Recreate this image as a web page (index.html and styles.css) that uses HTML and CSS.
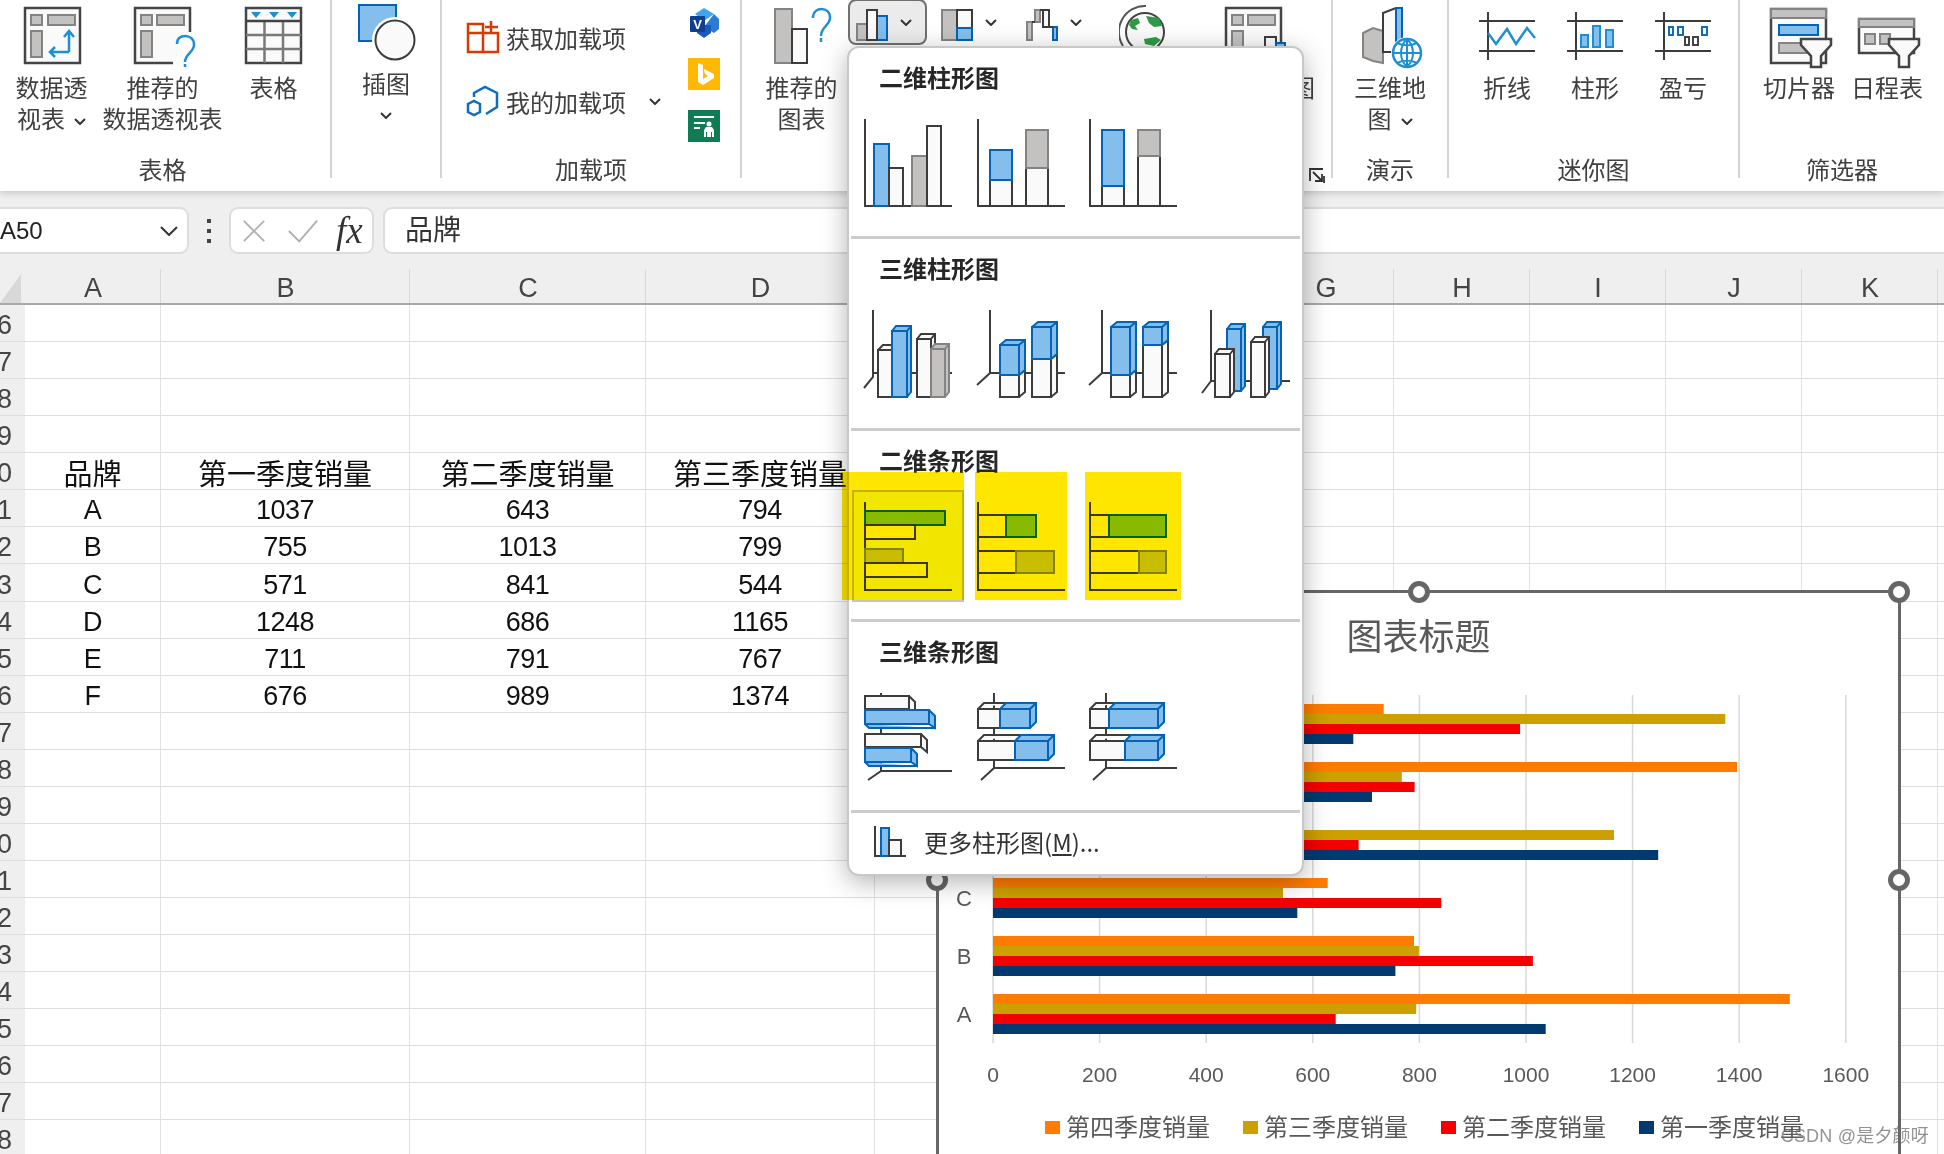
FILE: index.html
```html
<!DOCTYPE html>
<html lang="zh-CN">
<head>
<meta charset="utf-8">
<title>Excel 插入图表</title>
<link rel="stylesheet" href="styles.css">
</head>
<body>
<header class="ribbon">
  <section class="group g1">
    <div class="body">
      <div class="btn">
        <svg class="big" viewBox="0 0 60 73"><rect class="frame" x="3" y="8" width="55" height="55"/><path class="lg" d="M9 15h11v10H9zM26 15h27v10H26zM9 31h11v26H9z"/><path class="arrow" d="M47 52V32M42 37l5-6 5 6M47 52H28M33 47l-5 5 5 5"/></svg>
        <div class="lbl">数据透<br>视表<svg class="chev in" viewBox="0 0 12 7"><path d="M1 1l5 5 5-5"/></svg></div>
      </div>
      <div class="btn">
        <svg class="big" viewBox="0 0 60 73"><path class="frame" d="M40 63H2V8H57V32"/><path class="lg" d="M8 15h11v10H8zM24 15h27v10H24zM8 31h11v26H8z"/><path class="arrow" d="M44 44C44 38 48 36 52 36C57 36 61 39 61 45C61 52 52 54 52 62M52 64v3"/></svg>
        <div class="lbl">推荐的<br>数据透视表</div>
      </div>
      <div class="btn">
        <svg class="big" viewBox="0 0 60 73"><rect class="frame" x="2" y="8" width="55" height="55"/><path class="grid" d="M2 35H57M2 49H57M20.5 21V63M39 21V63"/><path class="dark" d="M2 21H57"/><path class="tri" d="M7 12h10l-5 6zM25 12h10l-5 6zM43 12h10l-5 6z"/></svg>
        <div class="lbl">表格</div>
      </div>
    </div>
    <div class="glabel">表格</div>
  </section>

  <section class="group g2">
    <div class="body">
      <div class="btn">
        <svg class="big" viewBox="0 0 60 73"><rect class="lb" x="3" y="5" width="37" height="36"/><circle class="halo" cx="39" cy="40" r="23"/><circle class="lw" cx="39" cy="40" r="19.5"/></svg>
        <div class="lbl up">插图<br><svg class="chev" viewBox="0 0 12 7"><path d="M1 1l5 5 5-5"/></svg></div>
      </div>
    </div>
  </section>

  <section class="group g3">
    <div class="body">
      <div class="addins">
        <div class="addin">
          <svg class="mid" viewBox="0 0 32 32"><path class="red" d="M17 3H1V31H31V12H1M16 3V31M24 0V13M18 6H31"/></svg>
          <span>获取加载项</span>
        </div>
        <div class="addin">
          <svg class="mid" viewBox="0 0 32 32"><path class="hex" d="M7 12V8L18 2l12 6v14l-11 7M13 19l-6-3-6 3v8l6 3 6-3z"/></svg>
          <span>我的加载项</span>
          <svg class="chev far" viewBox="0 0 12 7"><path d="M1 1l5 5 5-5"/></svg>
        </div>
      </div>
      <div class="apps">
        <svg class="app" viewBox="0 0 32 30"><path class="v1" d="M16 0l10 6-10 7-9-7z"/><path class="v2" d="M26 6l5 5v10l-5 4-10-6z"/><path class="v3" d="M9 17h14v8l-7 5-7-5z"/><rect class="v4" x="2" y="8" width="15" height="16" rx="1"/><text class="vt" x="9.500" y="21">V</text></svg>
        <svg class="app" viewBox="0 0 32 32"><rect class="bing" width="32" height="32"/><path class="wh" d="M10 5l5 2v14l5-3-3-2-1-5 10 5v4l-11 7-5-3z"/></svg>
        <svg class="app" viewBox="0 0 32 32"><rect class="peo" width="32" height="32"/><path class="wh" d="M6 6h20v2H6zM6 12h11v2H6zM6 17h6v2H6z"/><circle class="wh" cx="21" cy="14" r="2.500"/><path class="wh" d="M16 27v-7l2-3h6l2 3v7h-2v-5h-1v5h-4v-5h-1v5z"/></svg>
      </div>
    </div>
    <div class="glabel">加载项</div>
  </section>

  <section class="group g4">
    <div class="body">
      <div class="btn first">
        <svg class="big" viewBox="0 0 60 73"><rect class="lg" x="3" y="9" width="17" height="54"/><rect class="lw" x="20" y="29" width="15" height="34"/><path class="arrow" d="M41 18C41 11 46 9 49.500 9C54 9 58 12 58 18C58 25 49 27 49 36M49 38v4"/></svg>
        <div class="lbl">推荐的<br>图表</div>
      </div>
      <div class="small-row">
        <div class="sb on">
          <svg class="sm" viewBox="0 0 32 38"><rect class="lg" x="1" y="21" width="10" height="16"/><rect class="lb" x="21" y="13" width="10" height="24"/><rect class="lw" x="11" y="7" width="10" height="30"/></svg>
          <svg class="chev" viewBox="0 0 12 7"><path d="M1 1l5 5 5-5"/></svg>
        </div>
        <div class="sb">
          <svg class="sm" viewBox="0 0 32 38"><rect class="lg" x="1" y="7" width="15" height="30"/><rect class="lw" x="16" y="7" width="15" height="18"/><rect class="lb" x="16" y="25" width="15" height="12"/></svg>
          <svg class="chev" viewBox="0 0 12 7"><path d="M1 1l5 5 5-5"/></svg>
        </div>
        <div class="sb">
          <svg class="sm" viewBox="0 0 32 38"><path class="lg" d="M1 19h5v18H1zM9 7h5v12H9z"/><path class="lw" d="M17 7h6v17h-6z"/><path class="lb" d="M27 24h4v13h-4z"/><path class="ax" d="M6 19h3M14 7h3M23 24h4"/></svg>
          <svg class="chev" viewBox="0 0 12 7"><path d="M1 1l5 5 5-5"/></svg>
        </div>
      </div>
      <svg class="globe" viewBox="0 0 46 46"><circle class="gb" cx="26" cy="32" r="19"/><path class="arc" d="M27 6A26 26 0 0 0 4 46"/><path class="land" d="M12 20l7-2 2 5-5 3 3 4-6-1-3-4zM27 16l13 2 3 8-8 1-5-4zM25 39l12-2 5 3-7 6-9-2z"/></svg>
      <div class="btn pivotchart">
        <svg class="big" viewBox="0 0 60 73"><rect class="frame" x="1" y="8" width="55" height="55"/><path class="lg" d="M7 15h11v10H7zM23 15h27v10H23zM7 31h11v26H7z"/><rect class="lw" x="40" y="37" width="11" height="26"/><rect class="lb" x="51" y="43" width="9" height="20"/></svg>
        <div class="lbl">数据透视图</div>
      </div>
    </div>
    <div class="glabel">图表</div>
    <svg class="launch" viewBox="0 0 16 16"><path d="M1 13V1H14M4 4l9 9M13 6v7H6M15 8v7"/></svg>
  </section>

  <section class="group g5">
    <div class="body">
      <div class="btn">
        <svg class="big" viewBox="0 0 60 73"><path class="lg" d="M3 33l10-5 10 3v32l-10-2-10-4z"/><path class="lw" d="M23 13l13-5h6v44H23z"/><path class="lb" d="M36 8h6v38h-6z"/><circle class="halo" cx="47" cy="53" r="16"/><circle class="earth" cx="47" cy="53" r="14"/><path class="earth-l" d="M33 53H61M47 39V67M37 43c6 3 14 3 20 0M37 63c6-3 14-3 20 0M47 39c-8 8-8 20 0 28M47 39c8 8 8 20 0 28"/></svg>
        <div class="lbl">三维地<br>图<svg class="chev in" viewBox="0 0 12 7"><path d="M1 1l5 5 5-5"/></svg></div>
      </div>
    </div>
    <div class="glabel">演示</div>
  </section>

  <section class="group g6">
    <div class="body">
      <div class="btn spark">
        <svg class="big" viewBox="0 0 60 73"><path class="ax" d="M2 21H58M2 51H58M11 12V60"/><path class="arrow" d="M11 33l8 11 11-15 9 15 11-16 8 10"/></svg>
        <div class="lbl">折线</div>
      </div>
      <div class="btn spark">
        <svg class="big" viewBox="0 0 60 73"><path class="ax" d="M2 21H58M2 51H58M11 12V60"/><path class="sb1" d="M16 35h7v12h-7zM28 26h7v21h-7zM41 30h7v17h-7z"/></svg>
        <div class="lbl">柱形</div>
      </div>
      <div class="btn spark">
        <svg class="big" viewBox="0 0 60 73"><path class="ax" d="M2 21H58M2 51H58M11 12V60"/><path class="sb2" d="M16 27h4v8h-4zM25 27h5v8h-5zM49 27h5v8h-5z"/><path class="sb3" d="M32 37h4v8h-4zM40 37h5v8h-5z"/></svg>
        <div class="lbl">盈亏</div>
      </div>
    </div>
    <div class="glabel">迷你图</div>
  </section>

  <section class="group g7">
    <div class="body">
      <div class="btn spark">
        <svg class="big" viewBox="0 0 60 73"><rect class="frame" x="2" y="9" width="55" height="54"/><rect class="lg" x="2" y="9" width="55" height="9"/><rect class="lb" x="10" y="25" width="39" height="10"/><rect class="lg" x="10" y="43" width="30" height="10"/><path class="funnel" d="M32 39H62V45L52 56V67H42V56L32 45z"/></svg>
        <div class="lbl">切片器</div>
      </div>
      <div class="btn spark">
        <svg class="big" viewBox="0 0 60 73"><rect class="frame" x="2" y="19" width="55" height="34"/><rect class="lg" x="2" y="19" width="55" height="8"/><path class="lg" d="M8 34h10v10H8zM23 34h10v10H23z"/><path class="funnel" d="M32 39H62V45L52 56V67H42V56L32 45z"/></svg>
        <div class="lbl">日程表</div>
      </div>
    </div>
    <div class="glabel">筛选器</div>
  </section>
</header>

<div class="formula">
  <div class="namebox"><span>A50</span><svg class="chev lg-chev" viewBox="0 0 18 10"><path d="M1 1l8 8 8-8"/></svg></div>
  <svg class="dots" viewBox="0 0 6 26"><path d="M1 1h4v4H1zM1 11h4v4H1zM1 21h4v4H1z"/></svg>
  <div class="fxbox">
    <svg class="fxi" viewBox="0 0 26 26"><path d="M2 2l22 22M24 2L2 24"/></svg>
    <svg class="fxi" viewBox="0 0 34 24"><path d="M2 12l11 11L32 1"/></svg>
    <span class="fx">fx</span>
  </div>
  <div class="fbar">品牌</div>
</div>

<table class="sheet">
  <colgroup>
    <col class="c-rh"><col class="c-a"><col class="c-b"><col class="c-c"><col class="c-d"><col class="c-e"><col class="c-f"><col class="c-n"><col class="c-n"><col class="c-n"><col class="c-n"><col class="c-n"><col class="c-n">
  </colgroup>
  <thead>
    <tr><th class="corner"><svg class="cornertri" viewBox="0 0 21 29"><path d="M21 0V29H0z"/></svg></th><th>A</th><th>B</th><th>C</th><th>D</th><th>E</th><th>F</th><th>G</th><th>H</th><th>I</th><th>J</th><th>K</th><th>L</th></tr>
  </thead>
  <tbody>
    <tr><th class="rh">46</th><td></td><td></td><td></td><td></td><td></td><td></td><td></td><td></td><td></td><td></td><td></td><td></td></tr>
    <tr><th class="rh">47</th><td></td><td></td><td></td><td></td><td></td><td></td><td></td><td></td><td></td><td></td><td></td><td></td></tr>
    <tr><th class="rh">48</th><td></td><td></td><td></td><td></td><td></td><td></td><td></td><td></td><td></td><td></td><td></td><td></td></tr>
    <tr><th class="rh">49</th><td></td><td></td><td></td><td></td><td></td><td></td><td></td><td></td><td></td><td></td><td></td><td></td></tr>
    <tr><th class="rh">50</th><td class="zh">品牌</td><td class="zh">第一季度销量</td><td class="zh">第二季度销量</td><td class="zh">第三季度销量</td><td class="zh">第四季度销量</td><td></td><td></td><td></td><td></td><td></td><td></td><td></td></tr>
    <tr><th class="rh">51</th><td>A</td><td>1037</td><td>643</td><td>794</td><td>1495</td><td></td><td></td><td></td><td></td><td></td><td></td><td></td></tr>
    <tr><th class="rh">52</th><td>B</td><td>755</td><td>1013</td><td>799</td><td>790</td><td></td><td></td><td></td><td></td><td></td><td></td><td></td></tr>
    <tr class="tall"><th class="rh">53</th><td>C</td><td>571</td><td>841</td><td>544</td><td>628</td><td></td><td></td><td></td><td></td><td></td><td></td><td></td></tr>
    <tr><th class="rh">54</th><td>D</td><td>1248</td><td>686</td><td>1165</td><td>500</td><td></td><td></td><td></td><td></td><td></td><td></td><td></td></tr>
    <tr><th class="rh">55</th><td>E</td><td>711</td><td>791</td><td>767</td><td>1396</td><td></td><td></td><td></td><td></td><td></td><td></td><td></td></tr>
    <tr><th class="rh">56</th><td>F</td><td>676</td><td>989</td><td>1374</td><td>733</td><td></td><td></td><td></td><td></td><td></td><td></td><td></td></tr>
    <tr><th class="rh">57</th><td></td><td></td><td></td><td></td><td></td><td></td><td></td><td></td><td></td><td></td><td></td><td></td></tr>
    <tr><th class="rh">58</th><td></td><td></td><td></td><td></td><td></td><td></td><td></td><td></td><td></td><td></td><td></td><td></td></tr>
    <tr><th class="rh">59</th><td></td><td></td><td></td><td></td><td></td><td></td><td></td><td></td><td></td><td></td><td></td><td></td></tr>
    <tr><th class="rh">60</th><td></td><td></td><td></td><td></td><td></td><td></td><td></td><td></td><td></td><td></td><td></td><td></td></tr>
    <tr><th class="rh">61</th><td></td><td></td><td></td><td></td><td></td><td></td><td></td><td></td><td></td><td></td><td></td><td></td></tr>
    <tr><th class="rh">62</th><td></td><td></td><td></td><td></td><td></td><td></td><td></td><td></td><td></td><td></td><td></td><td></td></tr>
    <tr><th class="rh">63</th><td></td><td></td><td></td><td></td><td></td><td></td><td></td><td></td><td></td><td></td><td></td><td></td></tr>
    <tr><th class="rh">64</th><td></td><td></td><td></td><td></td><td></td><td></td><td></td><td></td><td></td><td></td><td></td><td></td></tr>
    <tr><th class="rh">65</th><td></td><td></td><td></td><td></td><td></td><td></td><td></td><td></td><td></td><td></td><td></td><td></td></tr>
    <tr><th class="rh">66</th><td></td><td></td><td></td><td></td><td></td><td></td><td></td><td></td><td></td><td></td><td></td><td></td></tr>
    <tr><th class="rh">67</th><td></td><td></td><td></td><td></td><td></td><td></td><td></td><td></td><td></td><td></td><td></td><td></td></tr>
    <tr><th class="rh">68</th><td></td><td></td><td></td><td></td><td></td><td></td><td></td><td></td><td></td><td></td><td></td><td></td></tr>
  </tbody>
</table>

<div class="chart">
  <div class="chart-title">图表标题</div>
  <svg class="plot" viewBox="0 0 957 415">
    <g class="gl">
      <path d="M53 5V353M159.600 5V353M266.200 5V353M372.800 5V353M479.400 5V353M586 5V353M692.600 5V353M799.200 5V353M905.800 5V353"/>
    </g>
    <g class="q4"><rect x="53" y="14" width="390.700" height="10"/><rect x="53" y="72" width="744.100" height="10"/><rect x="53" y="130" width="266.500" height="10"/><rect x="53" y="188" width="334.700" height="10"/><rect x="53" y="246" width="421" height="10"/><rect x="53" y="304" width="796.800" height="10"/></g>
    <g class="q3"><rect x="53" y="24" width="732.300" height="10"/><rect x="53" y="82" width="408.800" height="10"/><rect x="53" y="140" width="621" height="10"/><rect x="53" y="198" width="290" height="10"/><rect x="53" y="256" width="425.900" height="10"/><rect x="53" y="314" width="423.200" height="10"/></g>
    <g class="q2"><rect x="53" y="34" width="527.100" height="10"/><rect x="53" y="92" width="421.600" height="10"/><rect x="53" y="150" width="365.600" height="10"/><rect x="53" y="208" width="448.300" height="10"/><rect x="53" y="266" width="539.900" height="10"/><rect x="53" y="324" width="342.700" height="10"/></g>
    <g class="q1"><rect x="53" y="44" width="360.300" height="10"/><rect x="53" y="102" width="379" height="10"/><rect x="53" y="160" width="665.200" height="10"/><rect x="53" y="218" width="304.300" height="10"/><rect x="53" y="276" width="402.400" height="10"/><rect x="53" y="334" width="552.700" height="10"/></g>
    <g class="cat"><text x="24" y="37">F</text><text x="24" y="95">E</text><text x="24" y="153">D</text><text x="24" y="216">C</text><text x="24" y="274">B</text><text x="24" y="332">A</text></g>
    <g class="val"><text x="53" y="392">0</text><text x="159.600" y="392">200</text><text x="266.200" y="392">400</text><text x="372.800" y="392">600</text><text x="479.400" y="392">800</text><text x="586" y="392">1000</text><text x="692.600" y="392">1200</text><text x="799.200" y="392">1400</text><text x="905.800" y="392">1600</text></g>
  </svg>
  <div class="legend">
    <div class="leg"><i class="sw s4"></i>第四季度销量</div>
    <div class="leg"><i class="sw s3"></i>第三季度销量</div>
    <div class="leg"><i class="sw s2"></i>第二季度销量</div>
    <div class="leg"><i class="sw s1"></i>第一季度销量</div>
  </div>
  <i class="handle h-tc"></i><i class="handle h-tr"></i><i class="handle h-ml"></i><i class="handle h-mr"></i>
</div>

<div class="menu">
  <section class="msec">
    <h3>二维柱形图</h3>
    <div class="tiles">
      <div class="tile"><svg class="ic" viewBox="0 0 88 88"><path class="ax" d="M1 0V87H88"/><rect class="lb" x="10" y="25" width="15" height="62"/><rect class="lw" x="25" y="49" width="14" height="38"/><rect class="lg" x="48" y="37" width="15" height="50"/><rect class="lw" x="63" y="7" width="14" height="80"/></svg></div>
      <div class="tile"><svg class="ic" viewBox="0 0 88 88"><path class="ax" d="M1 0V87H88"/><rect class="lw" x="13" y="61" width="22" height="26"/><rect class="lb" x="13" y="31" width="22" height="30"/><rect class="lw" x="49" y="49" width="22" height="38"/><rect class="lg" x="49" y="11" width="22" height="38"/></svg></div>
      <div class="tile"><svg class="ic" viewBox="0 0 88 88"><path class="ax" d="M1 0V87H88"/><rect class="lw" x="13" y="67" width="22" height="20"/><rect class="lb" x="13" y="11" width="22" height="56"/><rect class="lw" x="49" y="37" width="22" height="50"/><rect class="lg" x="49" y="11" width="22" height="26"/></svg></div>
    </div>
  </section>
  <section class="msec">
    <h3>三维柱形图</h3>
    <div class="tiles">
      <div class="tile"><svg class="ic" viewBox="0 0 88 88"><path class="ax" d="M9 0V67L0 78M9 63H88"/><path class="lw" d="M14 40h14v47h-14zM14 40l5-5h14v47l-5 5M28 40l5-5"/><path class="lb" d="M28 21h15v66h-15zM28 21l4-5h15v66l-4 5M43 21l4-5"/><path class="lw" d="M53 29h14v58h-14zM53 29l4-5h14v58l-4 5M67 29l4-5"/><path class="lg" d="M67 39h14v48h-14zM67 39l4-5h14v48l-4 5M81 39l4-5"/></svg></div>
      <div class="tile"><svg class="ic" viewBox="0 0 88 88"><path class="ax" d="M13 0V63L0 75M13 63H88"/><path class="lw" d="M23 65h19v22h-19zM42 65l6-5v22l-6 5"/><path class="lb" d="M23 35h19v30h-19zM23 35l6-5h19v30l-6 5M42 35l6-5"/><path class="lw" d="M55 49h19v38h-19zM74 49l6-5v38l-6 5"/><path class="lb" d="M55 17h19v32h-19zM55 17l6-5h19v32l-6 5M74 17l6-5"/></svg></div>
      <div class="tile"><svg class="ic" viewBox="0 0 88 88"><path class="ax" d="M13 0V63L0 75M13 63H88"/><path class="lw" d="M22 65h19v22h-19zM41 65l6-5v22l-6 5"/><path class="lb" d="M22 17h19v48h-19zM22 17l6-5h19v48l-6 5M41 17l6-5"/><path class="lw" d="M54 35h19v52h-19zM73 35l6-5v52l-6 5"/><path class="lb" d="M54 17h19v18h-19zM54 17l6-5h19v18l-6 5M73 17l6-5"/></svg></div>
      <div class="tile"><svg class="ic" viewBox="0 0 88 88"><path class="ax" d="M9 0V71L0 83M9 71H88"/><path class="lb" d="M25 19h14v62h-14zM25 19l4-5h14v62l-4 5M39 19l4-5"/><path class="lw" d="M13 44h15v43h-15zM13 44l4-5h15v43l-4 5M28 44l4-5"/><path class="lb" d="M61 17h14v62h-14zM61 17l4-5h14v62l-4 5M75 17l4-5"/><path class="lw" d="M49 32h14v55h-14zM49 32l4-5h14v55l-4 5M63 32l4-5"/></svg></div>
    </div>
  </section>
  <section class="msec marked">
    <h3>二维条形图</h3>
    <div class="tiles">
      <div class="tile hover"><svg class="ic" viewBox="0 0 88 88"><path class="ax" d="M1 0V88H88"/><rect class="lb" x="1" y="9" width="80" height="14"/><rect class="lw" x="1" y="23" width="50" height="14"/><rect class="lg" x="1" y="47" width="38" height="14"/><rect class="lw" x="1" y="61" width="62" height="14"/></svg></div>
      <div class="tile"><svg class="ic" viewBox="0 0 88 88"><path class="ax" d="M1 0V88H88"/><rect class="lw" x="1" y="13" width="28" height="22"/><rect class="lb" x="29" y="13" width="30" height="22"/><rect class="lw" x="1" y="49" width="38" height="22"/><rect class="lg" x="39" y="49" width="38" height="22"/></svg></div>
      <div class="tile"><svg class="ic" viewBox="0 0 88 88"><path class="ax" d="M1 0V88H88"/><rect class="lw" x="1" y="13" width="19" height="22"/><rect class="lb" x="20" y="13" width="57" height="22"/><rect class="lw" x="1" y="49" width="49" height="22"/><rect class="lg" x="50" y="49" width="27" height="22"/></svg></div>
    </div>
  </section>
  <section class="msec">
    <h3>三维条形图</h3>
    <div class="tiles">
      <div class="tile"><svg class="ic" viewBox="0 0 88 88"><path class="ax" d="M17 0V78L4 87M17 78H88"/><path class="lw" d="M1 3h44v13H1zM45 3l6 6v11l-6-4"/><path class="lb" d="M1 17h64v14H1zM65 17l6 6v12l-6-4M1 31l4 4h66"/><path class="lw" d="M1 41h56v13H1zM57 41l6 6v12l-6-5"/><path class="lb" d="M1 55h46v14H1zM47 55l6 6v12l-6-4M1 69l4 4h48"/></svg></div>
      <div class="tile"><svg class="ic" viewBox="0 0 88 88"><path class="ax" d="M17 0V75L4 87M17 75H88"/><path class="lw" d="M1 16h22v19H1zM1 16l6-6h22"/><path class="lb" d="M23 16h30v19H23zM23 16l6-6h30v19l-6 6M53 16l6-6"/><path class="lw" d="M1 48h37v19H1zM1 48l6-6h37"/><path class="lb" d="M38 48h33v19H38zM38 48l6-6h33v19l-6 6M71 48l6-6"/></svg></div>
      <div class="tile"><svg class="ic" viewBox="0 0 88 88"><path class="ax" d="M17 0V75L4 87M17 75H88"/><path class="lw" d="M1 16h19v19H1zM1 16l6-6h19"/><path class="lb" d="M20 16h49v19H20zM20 16l6-6h49v19l-6 6M69 16l6-6"/><path class="lw" d="M1 48h35v19H1zM1 48l6-6h35"/><path class="lb" d="M36 48h33v19H36zM36 48l6-6h33v19l-6 6M69 48l6-6"/></svg></div>
    </div>
  </section>
  <footer class="mfoot">
    <svg class="fic" viewBox="0 0 32 31"><path class="ax" d="M1 0V30H32"/><rect class="lb" x="7" y="2" width="8" height="28"/><rect class="lw" x="15" y="14" width="12" height="16"/></svg>
    <span>更多柱形图(<u>M</u>)...</span>
  </footer>
</div>

<i class="mark m1"></i><i class="mark m2"></i><i class="mark m3"></i>
<div class="wm">CSDN @是夕颜呀</div>
</body>
</html>
```
FILE: styles.css
```css
* { box-sizing: border-box; }
html, body { margin: 0; padding: 0; }
body {
  width: 1944px; height: 1154px; overflow: hidden; position: relative; background: #fff;
  font-family: "Liberation Sans", "Noto Sans CJK SC", sans-serif; color: #404040;
}
svg { display: block; }

/* ribbon */
.ribbon { display: flex; height: 191px; background: #fff; box-shadow: 0 2px 7px rgba(0,0,0,.18); position: relative; z-index: 2; }
.group { height: 178px; display: flex; flex-direction: column; border-right: 2px solid #d4d4d4; flex: none; position: relative; }
.g1 { width: 332px; } .g2 { width: 110px; } .g3 { width: 300px; } .g4 { width: 591px; } .g5 { width: 116px; } .g6 { width: 291px; }
.g7 { flex: 1; border-right: 0; }
.body { flex: 1; display: flex; min-height: 0; }
.glabel { font-size: 24px; line-height: 30px; text-align: center; margin-bottom: -8px; color: #404040; }
.g1 .glabel { padding-right: 5px; }
.g1 .body { margin-left: -4px; }
.g2 .body, .g5 .body { justify-content: center; }
.g6 .body { padding-left: 14px; }
.g7 .body { padding-left: 15px; }
.btn { width: 111px; flex: none; display: flex; flex-direction: column; align-items: center; }
.btn.spark { width: 88px; }
.btn.first { margin-left: 4px; }
.btn.pivotchart { width: 122px; margin-left: 29px; }
.big { width: 60px; height: 73px; flex: none; overflow: visible; }
.lbl { font-size: 24px; line-height: 31px; text-align: center; white-space: nowrap; color: #404040; }
.lbl.up { margin-top: -4px; }
.lbl.up .chev { margin: 12px auto 0; }
.chev { width: 12px; height: 7px; fill: none; stroke: #333; stroke-width: 2; flex: none; }
.chev.in { display: inline-block; margin-left: 9px; vertical-align: 3px; }
.chev.far { margin-left: 16px; }
.frame { fill: #fafafa; stroke: #444; stroke-width: 2.5; }
.lg { fill: #c3c2c0; stroke: #838383; stroke-width: 2; }
.lb { fill: #83beec; stroke: #0563b5; stroke-width: 2; }
.lw { fill: #fafafa; stroke: #3c3c3c; stroke-width: 2; }
.ax { fill: none; stroke: #3c3c3c; stroke-width: 2; }
.arrow { fill: none; stroke: #1f8fd3; stroke-width: 2.5; }
.grid { fill: none; stroke: #7a7a7a; stroke-width: 2.5; }
.dark { fill: none; stroke: #444; stroke-width: 2.5; }
.tri { fill: #1f8fd3; }
.halo { fill: #fff; }
.funnel { fill: #fafafa; stroke: #444; stroke-width: 2.5; }
.earth { fill: #fff; stroke: #1f8fd3; stroke-width: 2.5; }
.earth-l { fill: none; stroke: #1f8fd3; stroke-width: 2; }
.sb1 { fill: #83beec; stroke: #1f8fd3; stroke-width: 2; }
.sb2 { fill: #fff; stroke: #0f6cbd; stroke-width: 2; }
.sb3 { fill: #fff; stroke: #444; stroke-width: 2; }

.addins { width: 197px; margin-left: 25px; padding-top: 5px; flex: none; }
.addin { height: 64px; display: flex; align-items: center; font-size: 24px; white-space: nowrap; gap: 7px; }
.mid { width: 32px; height: 32px; flex: none; overflow: visible; }
.red { fill: none; stroke: #d83b01; stroke-width: 2.5; }
.hex { fill: none; stroke: #106ebe; stroke-width: 2.5; }
.apps { margin-left: 24px; padding-top: 8px; display: flex; flex-direction: column; gap: 20px; }
.app { width: 32px; height: 30px; flex: none; }
.app + .app { height: 32px; }
.v1 { fill: #41a5ee; } .v2 { fill: #2b7cd3; } .v3 { fill: #185abd; } .v4 { fill: #103f91; }
.vt { fill: #fff; font-size: 13px; font-weight: 700; text-anchor: middle; }
.bing { fill: #ffb900; } .peo { fill: #107c56; } .wh { fill: #fff; }

.small-row { display: flex; gap: 6px; align-self: flex-start; margin: -1px 0 0 -9px; }
.sb { width: 79px; height: 46px; padding-left: 8px; display: flex; align-items: center; gap: 12px; border-radius: 8px; }
.sb.on { background: #ebebeb; border: 2px solid #707070; padding-left: 6px; }
.sm { width: 32px; height: 38px; flex: none; }
.globe { width: 46px; height: 46px; margin-left: 22px; flex: none; }
.gb { fill: #fafafa; stroke: #444; stroke-width: 2; }
.arc { fill: none; stroke: #555; stroke-width: 2; }
.land { fill: #2e9a47; }
.launch { position: absolute; right: 6px; bottom: -6px; width: 16px; height: 16px; fill: none; stroke: #333; stroke-width: 1.8; }

/* formula bar */
.formula { height: 64px; padding-top: 16px; background: #efefef; display: flex; align-items: flex-start; position: relative; z-index: 1; }
.namebox { width: 209px; height: 47px; margin-left: -20px; padding: 0 9px 0 18px; background: #fff; border: 2px solid #ddd; border-radius: 9px; display: flex; align-items: center; justify-content: space-between; font-size: 24px; color: #222; }
.lg-chev { width: 18px; height: 10px; stroke: #333; }
.dots { width: 6px; height: 26px; margin: 11px 17px 0 17px; fill: #444; flex: none; }
.fxbox { width: 145px; height: 47px; background: #fff; border: 2px solid #ddd; border-radius: 9px; display: flex; align-items: center; padding-left: 10px; gap: 20px; flex: none; }
.fxi { width: 26px; height: 24px; fill: none; stroke: #b0b0b0; stroke-width: 2; flex: none; }
.fxi + .fxi { width: 32px; }
.fx { font-family: "Liberation Serif", serif; font-style: italic; font-size: 37px; line-height: 40px; color: #333; margin-left: -3px; }
.fbar { flex: 1; height: 47px; margin: 0 -20px 0 9px; padding-left: 20px; background: #fff; border: 2px solid #ddd; border-radius: 9px; font-family: "Noto Sans CJK SC", sans-serif; font-size: 28px; line-height: 38px; color: #333; }

/* sheet */
.sheet { table-layout: fixed; width: 2074px; border-collapse: separate; border-spacing: 0; }
.c-rh { width: 25px; } .c-a { width: 136px; } .c-b { width: 249px; } .c-c { width: 236px; } .c-d { width: 229px; } .c-e { width: 191px; } .c-f { width: 192px; } .c-n { width: 136px; }
.sheet thead th {
  height: 50px; padding: 18px 0 0; font-size: 27px; font-weight: 400; line-height: 30px; color: #444; background: #efefef no-repeat right bottom;
  background-image: linear-gradient(#d8d8d8, #d8d8d8); background-size: 1px 34px; border-bottom: 2px solid #a8a8a8; overflow: visible;
}
.sheet thead th.corner { padding: 18px 0 0; background-image: none; }
.cornertri { width: 21px; height: 29px; fill: #d8d8d8; }
.sheet td, .rh { height: 37px; padding: 5px 0 0; line-height: 31px; border-bottom: 1px solid #dedede; }
.sheet td { border-right: 1px solid #e2e2e2; text-align: center; font-size: 27px; letter-spacing: -.5px; color: #111; }
.sheet td.zh { font-family: "Noto Sans CJK SC", sans-serif; font-size: 29px; letter-spacing: 0; white-space: nowrap; padding-top: 3px; line-height: 33px; }
.tall td, .tall .rh { height: 38px; }
.rh { background: #efefef; font-size: 27px; font-weight: 400; color: #444; direction: rtl; padding-right: 13px; overflow: hidden; white-space: nowrap; border-right: 0; }

/* chart */
.chart { position: absolute; left: 936px; top: 590px; width: 965px; height: 640px; background: #fff; border: 3px solid #666; z-index: 3; font-family: "Liberation Sans", "Noto Sans CJK SC", sans-serif; color: #595959; }
.chart-title { font-family: "Noto Sans CJK SC", sans-serif; font-size: 36px; line-height: 50px; margin-top: 16px; text-align: center; color: #595959; }
.plot { width: 957px; height: 415px; margin: 31px 0 0 1px; }
.gl path { fill: none; stroke: #d9d9d9; stroke-width: 1.5; }
.q4 rect { fill: #ff7c00; } .q3 rect { fill: #cca000; } .q2 rect { fill: #f50000; } .q1 rect { fill: #003a70; }
.cat text { font-size: 22px; fill: #595959; text-anchor: middle; }
.val text { font-size: 21px; fill: #595959; text-anchor: middle; }
.legend { display: flex; gap: 33px; padding-left: 106px; height: 44px; margin-top: -2px; align-items: center; white-space: nowrap; }
.leg { display: flex; align-items: center; gap: 6px; font-family: "Noto Sans CJK SC", sans-serif; font-size: 24px; color: #595959; }
.sw { width: 15px; height: 13px; flex: none; margin-top: 4px; }
.s4 { background: #ff7c00; } .s3 { background: #cca000; } .s2 { background: #f50000; } .s1 { background: #003a70; }
.handle { position: absolute; width: 22px; height: 22px; background: #fff; border: 5px solid #666; border-radius: 50%; }
.h-tc { left: 469px; top: -12px; }
.h-tr { left: 949px; top: -12px; }
.h-ml { left: -13px; top: 276px; }
.h-mr { left: 949px; top: 276px; }

/* chart type menu */
.menu { position: absolute; left: 847px; top: 46px; width: 457px; height: 830px; background: #fff; border: 2px solid #c8c8c8; border-radius: 12px; box-shadow: 0 6px 26px rgba(0,0,0,.3); z-index: 4; display: flex; flex-direction: column; font-family: "Noto Sans CJK SC", sans-serif; }
.msec { height: 191.300px; flex: none; padding: 13px 0 0 2px; margin: 0 2px; border-bottom: 3px solid #ccc; }
.msec h3 { margin: 0 0 14px 26px; font-size: 24px; line-height: 32px; font-weight: 700; color: #262626; }
.tiles { display: flex; margin-left: -1px; }
.tile { width: 112.500px; height: 112px; padding: 12px; flex: none; }
.tile.hover { background: #f2ffff; border: 2px solid #c4c4c4; padding: 10px; width: 112px; margin-right: .5px; }
.ic { width: 88px; height: 88px; overflow: visible; }
.marked .lb { fill: #87cfec; stroke: #056ab5; }
.marked .lg { fill: #c8d2c0; stroke: #80908a; }
.marked .lw { fill: #fff; }
.mfoot { flex: 1; display: flex; align-items: center; padding: 0 0 4px 25px; gap: 18px; font-size: 24px; color: #333; }
.fic { width: 32px; height: 31px; flex: none; }

/* yellow annotations */
.mark { position: absolute; top: 472px; height: 128px; background: #ffe600; mix-blend-mode: multiply; z-index: 5; }
.m1 { left: 842px; width: 122px; }
.m2 { left: 975px; width: 92px; }
.m3 { left: 1085px; width: 96px; }

.wm { position: absolute; right: 15px; top: 1124px; font-size: 18px; line-height: 24px; letter-spacing: .2px; color: rgba(110,110,110,.75); z-index: 6; white-space: nowrap; }
```
